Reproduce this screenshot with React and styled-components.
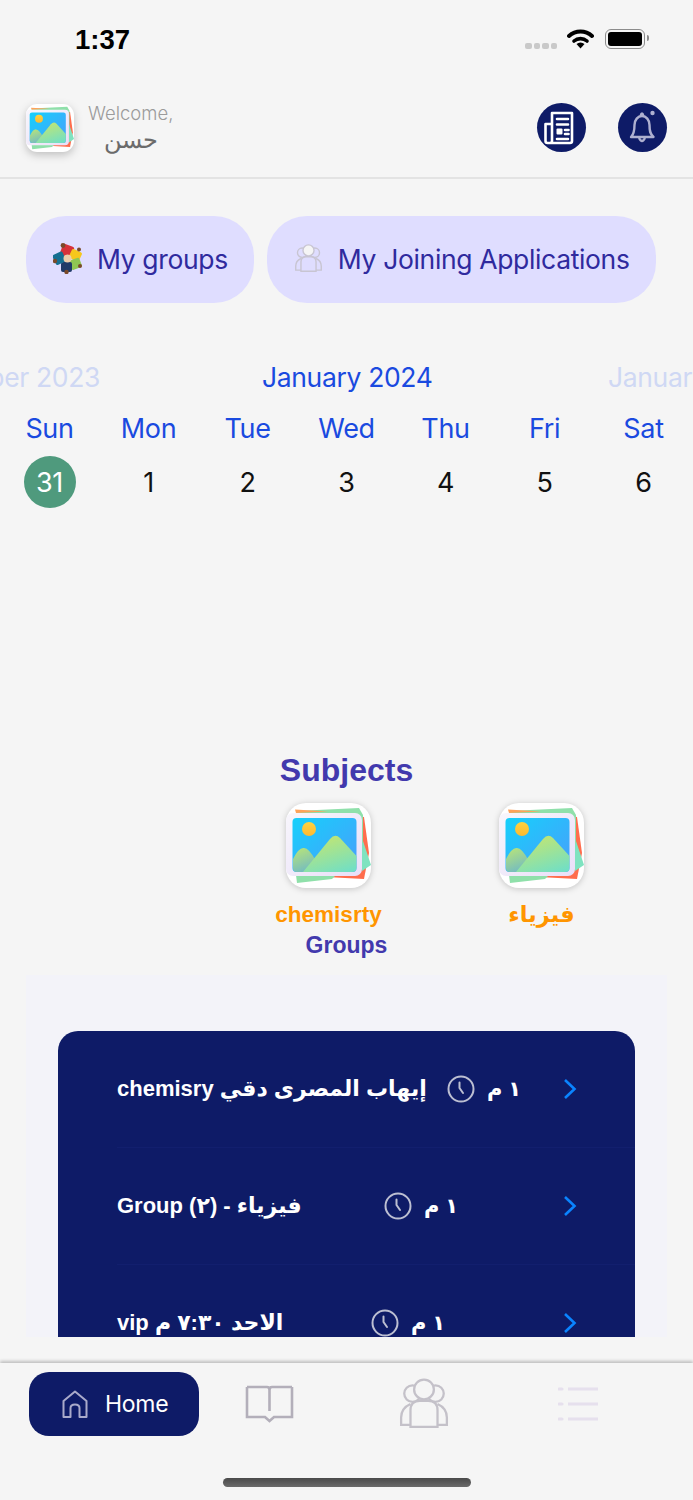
import React from 'react';
import styled, { createGlobalStyle } from 'styled-components';

const GlobalStyle = createGlobalStyle`
    html, body {
        margin:0;
        padding:0;
        background-color:#f5f5f5;
    }
    * {
        box-sizing:border-box;
    }
`;

const Page = styled.div`
    width:693px;
    height:1500px;
    overflow:hidden;
    background-color:#f5f5f5;
    font-family:"Liberation Sans", "DejaVu Sans", sans-serif;
`;

const StatusBar = styled.div`
    height:78px;
    padding:24px 48px 0 75px;
    display:flex;
    align-items:flex-start;
`;

const Clock = styled.span`
    font-size:27.5px;
    line-height:32px;
    font-weight:bold;
    color:#000;
    margin-right:auto;
`;

const SignalDots = styled.div`
    display:flex;
    gap:2px;
    margin:19px 10px 0 0;
`;

const SignalDot = styled.span`
    width:6.5px;
    height:6px;
    border-radius:2px;
    background-color:#c9c9c9;
`;

const Battery = styled.div`
    width:40px;
    height:20px;
    margin:5px 0 0 11px;
    padding:2px;
    border:1.5px solid #8c8c8c;
    border-radius:6px;
    position:relative;
    &::before {
        content:'';
        display:block;
        height:100%;
        background-color:#000;
        border-radius:3px;
    }
    &::after {
        content:'';
        position:absolute;
        right:-5px;
        top:5px;
        width:2px;
        height:6px;
        background-color:#8c8c8c;
        border-radius:0 2px 2px 0;
    }
`;

const Header = styled.div`
    height:101px;
    padding:0 26px;
    border-bottom:2px solid #e3e3e3;
    display:flex;
    align-items:center;
`;

const Avatar = styled.div`
    filter:drop-shadow(0 3px 4px rgba(0,0,0,0.22));
    height:48px;
`;

const Welcome = styled.div`
    margin-left:14px;
    display:flex;
    flex-direction:column;
    align-items:center;
    font-family:Inter, "DejaVu Sans", sans-serif;
    font-weight:300;
`;

const WelcomeLabel = styled.span`
    font-size:18.5px;
    line-height:24px;
    color:#9b9b9b;
`;

const WelcomeName = styled.span`
    font-size:24px;
    line-height:30px;
    color:#6b6b6b;
`;

const HeaderIcons = styled.div`
    margin-left:auto;
    display:flex;
    gap:32px;
`;

const RoundIcon = styled.div`
    width:49px;
    height:49px;
    border-radius:50%;
    background-color:#0e1b67;
    display:flex;
`;

const Pills = styled.div`
    margin-top:37px;
    padding:0 26px;
    display:flex;
    gap:13px;
`;

const Pill = styled.div`
    height:87px;
    padding:0 26px 2px 27px;
    border-radius:40px;
    background-color:#dfddff;
    display:flex;
    align-items:center;
    gap:15px;
    font-family:Inter, sans-serif;
    font-size:26.5px;
    letter-spacing:-0.35px;
    color:#2f2a9e;
    white-space:nowrap;
`;

const MonthRow = styled.div`
    margin-top:57px;
    display:grid;
    grid-template-columns:262px 169px 262px;
    font-family:Inter, sans-serif;
    font-size:26.5px;
    line-height:34px;
    letter-spacing:-0.35px;
    white-space:nowrap;
`;

const CurrentMonth = styled.div`
    color:#1a4ae0;
    text-align:center;
`;

const PrevMonth = styled.div`
    color:#cfd8f4;
    overflow:hidden;
    margin-right:162px;
    display:flex;
    justify-content:flex-end;
`;

const NextMonth = styled.div`
    color:#cfd8f4;
    overflow:hidden;
    margin-left:177px;
`;

const WeekRow = styled.div`
    display:grid;
    grid-template-columns:repeat(7, 99px);
    font-family:Inter, sans-serif;
    font-size:27px;
    letter-spacing:-0.35px;
    text-align:center;
`;

const WeekDays = styled(WeekRow)`
    margin-top:18px;
    line-height:34px;
    color:#1a4ae0;
`;

const Dates = styled(WeekRow)`
    margin-top:10px;
    line-height:54px;
    color:#111;
`;

const DateCell = styled.div`
    width:52px;
    height:52px;
    justify-self:center;
    border-radius:50%;
    color:${p => (p.$today ? '#fff' : '#111')};
    background-color:${p => (p.$today ? '#4f9a7d' : 'transparent')};
`;

const SubjectsTitle = styled.div`
    margin-top:242px;
    text-align:center;
    font-size:32px;
    line-height:40px;
    font-weight:bold;
    color:#4239ad;
`;

const Subjects = styled.div`
    margin-top:13px;
    padding-right:45px;
    display:flex;
    justify-content:flex-end;
`;

const Subject = styled.div`
    width:213px;
    display:flex;
    flex-direction:column;
    align-items:center;
`;

const SubjectThumb = styled.div`
    height:85px;
    filter:drop-shadow(0 1px 3px rgba(0,0,0,0.2));
`;

const SubjectName = styled.div`
    margin-top:14px;
    font-size:22.5px;
    line-height:26px;
    font-weight:bold;
    color:#ff9500;
`;

const GroupsTitle = styled.div`
    margin-top:4px;
    text-align:center;
    font-size:23px;
    line-height:26px;
    font-weight:bold;
    color:#4239ad;
`;

const GroupsPanel = styled.div`
    margin:17px 26px 0;
    height:362px;
    padding:56px 32px 0;
    background-color:#f3f3f9;
    overflow:hidden;
`;

const GroupsCard = styled.div`
    height:400px;
    border-radius:20px 20px 0 0;
    background-color:#0e1b67;
    padding-left:59px;
`;

const GroupRow = styled.div`
    height:117px;
    padding-right:58px;
    border-bottom:1px solid #121f6e;
    display:flex;
    align-items:center;
    color:#fff;
    font-weight:bold;
    white-space:nowrap;
`;

const GroupName = styled.div`
    width:${p => p.$width}px;
    font-size:22px;
`;

const GroupTime = styled.div`
    margin-left:12px;
    font-size:21px;
`;

const Chevron = styled.svg`
    margin-left:auto;
`;

const TabBar = styled.div`
    margin-top:26px;
    height:137px;
    padding:9px 0 0 29px;
    background-color:#f5f5f5;
    box-shadow:0 -2px 3px rgba(0,0,0,0.22);
    display:flex;
    flex-wrap:wrap;
    align-content:flex-start;
    position:relative;
`;

const HomeTab = styled.div`
    width:170px;
    height:64px;
    padding-left:33px;
    border-radius:20px;
    background-color:#0e1b67;
    display:flex;
    align-items:center;
    gap:17px;
    font-family:Inter, sans-serif;
    font-size:23px;
    letter-spacing:-0.3px;
    color:#fff;
`;

const Tab = styled.div`
    width:${p => p.$width}px;
    height:64px;
    display:flex;
    align-items:center;
    justify-content:center;
    filter:blur(0.4px);
`;

const HomeIndicator = styled.div`
    position:absolute;
    left:223px;
    top:115px;
    width:248px;
    height:9px;
    border-radius:5px;
    background:linear-gradient(#4a4a4a, #6a6a6a);
`;

const WifiIcon = () => (
    <svg width="27" height="21" viewBox="0 0 27 21" style={{ marginTop: 4 }}>
        <path d="M2 8 A17 17 0 0 1 25 8" fill="none" stroke="#000" strokeWidth="4" strokeLinecap="round" />
        <path d="M7 13 A10 10 0 0 1 20 13" fill="none" stroke="#000" strokeWidth="3.6" strokeLinecap="round" />
        <path d="M9.5 16 L13.5 20.5 L17.5 16 A6 6 0 0 0 9.5 16 Z" fill="#000" />
    </svg>
);

const PlaceholderImage = ({ size }) => (
    <svg width={size} height={size} viewBox="0 0 85 85">
        <defs>
            <linearGradient id="sky" x1="0" y1="0" x2="1" y2="1">
                <stop offset="0" stopColor="#16d0fb" />
                <stop offset="1" stopColor="#4a9dfb" />
            </linearGradient>
            <linearGradient id="hill" x1="0.3" y1="0" x2="0.8" y2="1">
                <stop offset="0" stopColor="#c5e66f" />
                <stop offset="1" stopColor="#72dfc4" />
            </linearGradient>
            <linearGradient id="hillSmall" x1="0.3" y1="0" x2="0.7" y2="1">
                <stop offset="0" stopColor="#b5e27c" />
                <stop offset="1" stopColor="#6fb9c6" />
            </linearGradient>
            <linearGradient id="sun" x1="0" y1="0" x2="0" y2="1">
                <stop offset="0" stopColor="#ffd23f" />
                <stop offset="1" stopColor="#fdb92f" />
            </linearGradient>
            <linearGradient id="frame" x1="0" y1="0" x2="1" y2="1">
                <stop offset="0" stopColor="#f8f6fc" />
                <stop offset="1" stopColor="#e9dff8" />
            </linearGradient>
        </defs>
        <rect width="85" height="85" rx="20" fill="#fff" />
        <path d="M70 13 L78 14 L83 50 L78 76 L40 74 Z" fill="#ff6d4d" />
        <path d="M76 35 L85 62 L76 68 Z" fill="#7fe3c0" />
        <path d="M10 8 L73 5 L77 12 L77 40 L10 40 Z" fill="#8fe0aa" />
        <path d="M9 6.500 L42 8.500 L10 10 Z" fill="#ffa25a" />
        <path d="M10 72 L11 80 L46 76 L50 72 Z" fill="#8fe0aa" />
        <rect x="0" y="10" width="76" height="63" rx="7" fill="url(#frame)" />
        <rect x="6.500" y="15" width="64" height="54" rx="4" fill="url(#sky)" />
        <circle cx="23" cy="26" r="7" fill="url(#sun)" />
        <path d="M7 56 Q13 44 18 45 Q23 45 30 58 L18 69 L11 69 Q7 69 7 65 Z" fill="url(#hillSmall)" />
        <path d="M17 69 L44 36 Q49 30 54 35 L70.500 53 L70.500 65 Q70.500 69 66 69 Z" fill="url(#hill)" />
    </svg>
);

const NewspaperIcon = () => (
    <svg width="49" height="49" viewBox="0 0 49 49" fill="none" stroke="#fff" strokeWidth="2.6" strokeLinecap="round" strokeLinejoin="round">
        <path d="M15 38 V10 H35 V38 Q35 40 33 40 H10.500 Q8.500 40 8.500 38 V21 H15 V38 Q15 40 13 40" />
        <path d="M20 16 H31 M20 21.500 H31 M28 27 H31.500 M28 31 H31.500 M20 36 H31" />
        <rect x="19.500" y="25.500" width="6" height="6" rx="1" fill="#fff" stroke="none" />
    </svg>
);

const BellIcon = () => (
    <svg width="49" height="49" viewBox="0 0 49 49" fill="none" stroke="#aeb0d0" strokeWidth="2.4" strokeLinejoin="round">
        <path d="M13 34 C16 31 16.500 28 16.500 22 A7.500 9 0 0 1 31.500 22 C31.500 28 32 31 35.500 34 Z" />
        <path d="M22.500 13 Q24 8 25.500 13 M21 35 Q24 41 27 35" />
        <circle cx="34.500" cy="10" r="2.200" fill="#aeb0d0" stroke="none" />
    </svg>
);

// the small round crowd shown on the "My groups" button
const CrowdIcon = () => (
    <svg width="29" height="31" viewBox="0 0 29 31">
        <rect x="8" y="2" width="12" height="12" rx="2" fill="#d6323a" transform="rotate(20 14 8)" />
        <rect x="17" y="7" width="11" height="10" rx="2" fill="#f6c71c" transform="rotate(25 22 12)" />
        <rect x="17" y="16" width="11" height="10" rx="2" fill="#8fc653" transform="rotate(-20 22 21)" />
        <rect x="8" y="19" width="11" height="10" rx="2" fill="#1f3a68" />
        <rect x="1" y="10" width="11" height="11" rx="2" fill="#156f91" transform="rotate(-25 6 16)" />
        <circle cx="14.500" cy="15.500" r="4" fill="#eccdaa" />
        <circle cx="10" cy="2.500" r="2.400" fill="#7a4a2a" />
        <circle cx="26" cy="6.500" r="2" fill="#7a4a2a" />
        <circle cx="27" cy="23" r="2" fill="#7a4a2a" />
        <circle cx="13.500" cy="29" r="2.200" fill="#7a4a2a" />
        <circle cx="2" cy="18" r="2.200" fill="#7a4a2a" />
    </svg>
);

const PeopleIcon = ({ size, color, width }) => (
    <svg width={size} height={size} viewBox="0 0 48 50" fill="none" stroke={color} strokeWidth={width}>
        <circle cx="13" cy="15" r="8" />
        <circle cx="35" cy="15" r="8" />
        <circle cx="24" cy="11" r="9.500" fill="#f5f5f5" />
        <path d="M11 47 V31 Q11 22 20 22 H28 Q37 22 37 31 V47 Z" />
        <path d="M11 25 Q2 29 2 38 V45 H11 M37 25 Q46 29 46 38 V45 H37" />
    </svg>
);

const BookIcon = () => (
    <svg width="49" height="38" viewBox="0 0 49 38" fill="none" stroke="#b3afba" strokeWidth="2.6">
        <path d="M2 2 H22 Q24.500 2 24.500 5 V26 M47 2 H27 Q24.500 2 24.500 5" />
        <path d="M2 2 V32 H20 L24.500 36 L29 32 H47 V2" />
    </svg>
);

const MenuIcon = () => (
    <svg width="40" height="38" viewBox="0 0 40 38" fill="none" stroke="#e6e0ed" strokeWidth="3.2">
        <path d="M10 4 H40 M10 19 H40 M10 34 H40" />
        <path d="M1 4 H4 M1 19 H4 M1 34 H4" strokeLinecap="round" />
    </svg>
);

const HomeIcon = () => (
    <svg width="26" height="28" viewBox="0 0 26 28" fill="none" stroke="#a9aaca" strokeWidth="2">
        <path d="M1.500 27 V11 L13 1.500 L24.500 11 V27 H17.500 V18 Q17.500 14.500 13 14.500 Q8.500 14.500 8.500 18 V27 Z" strokeLinejoin="round" />
    </svg>
);

const ClockIcon = () => (
    <svg width="28" height="28" viewBox="0 0 28 28" fill="none" stroke="#bcbfd2" strokeWidth="2" strokeLinecap="round" style={{ flexShrink: 0 }}>
        <circle cx="14" cy="14" r="12.500" />
        <path d="M12.500 7.500 V13 L16 18" />
    </svg>
);

const groups = [
    { id: 1, name: 'chemisry إيهاب المصرى دقي', width: 330 },
    { id: 2, name: 'Group (٢) - فيزياء', width: 267 },
    { id: 3, name: 'vip الاحد ٧:٣٠ م', width: 254 },
];

const subjects = ['chemisrty', 'فيزياء'];
const weekDays = ['Sun', 'Mon', 'Tue', 'Wed', 'Thu', 'Fri', 'Sat'];
const dates = [31, 1, 2, 3, 4, 5, 6];

export default function App() {
    return (
        <Page>
            <GlobalStyle />
            <StatusBar>
                <Clock>1:37</Clock>
                <SignalDots>
                    {[0, 1, 2, 3].map(i => <SignalDot key={i} />)}
                </SignalDots>
                <WifiIcon />
                <Battery />
            </StatusBar>
            <Header>
                <Avatar><PlaceholderImage size={48} /></Avatar>
                <Welcome>
                    <WelcomeLabel>Welcome,</WelcomeLabel>
                    <WelcomeName>حسن</WelcomeName>
                </Welcome>
                <HeaderIcons>
                    <RoundIcon><NewspaperIcon /></RoundIcon>
                    <RoundIcon><BellIcon /></RoundIcon>
                </HeaderIcons>
            </Header>
            <Pills>
                <Pill><CrowdIcon />My groups</Pill>
                <Pill><PeopleIcon size={29} color="#c8c5d2" width={2.4} />My Joining Applications</Pill>
            </Pills>
            <MonthRow>
                <PrevMonth>December 2023</PrevMonth>
                <CurrentMonth>January 2024</CurrentMonth>
                <NextMonth>January 2024</NextMonth>
            </MonthRow>
            <WeekDays>
                {weekDays.map(day => <div key={day}>{day}</div>)}
            </WeekDays>
            <Dates>
                {dates.map(date => <DateCell key={date} $today={date === 31}>{date}</DateCell>)}
            </Dates>
            <SubjectsTitle>Subjects</SubjectsTitle>
            <Subjects>
                {subjects.map(subject => (
                    <Subject key={subject}>
                        <SubjectThumb><PlaceholderImage size={85} /></SubjectThumb>
                        <SubjectName>{subject}</SubjectName>
                    </Subject>
                ))}
            </Subjects>
            <GroupsTitle>Groups</GroupsTitle>
            <GroupsPanel>
                <GroupsCard>
                    {groups.map(group => (
                        <GroupRow key={group.id}>
                            <GroupName $width={group.width}>{group.name}</GroupName>
                            <ClockIcon />
                            <GroupTime>١ م</GroupTime>
                            <Chevron width="14" height="22" viewBox="0 0 14 22" fill="none" stroke="#0a84ff" strokeWidth="2.6">
                                <path d="M2 2 L11.500 11 L2 20" />
                            </Chevron>
                        </GroupRow>
                    ))}
                </GroupsCard>
            </GroupsPanel>
            <TabBar>
                <HomeTab><HomeIcon />Home</HomeTab>
                <Tab $width={140}><BookIcon /></Tab>
                <Tab $width={170}><PeopleIcon size={52} color="#c4c1c9" width={2.2} /></Tab>
                <Tab $width={138}><MenuIcon /></Tab>
                <HomeIndicator />
            </TabBar>
        </Page>
    );
}
